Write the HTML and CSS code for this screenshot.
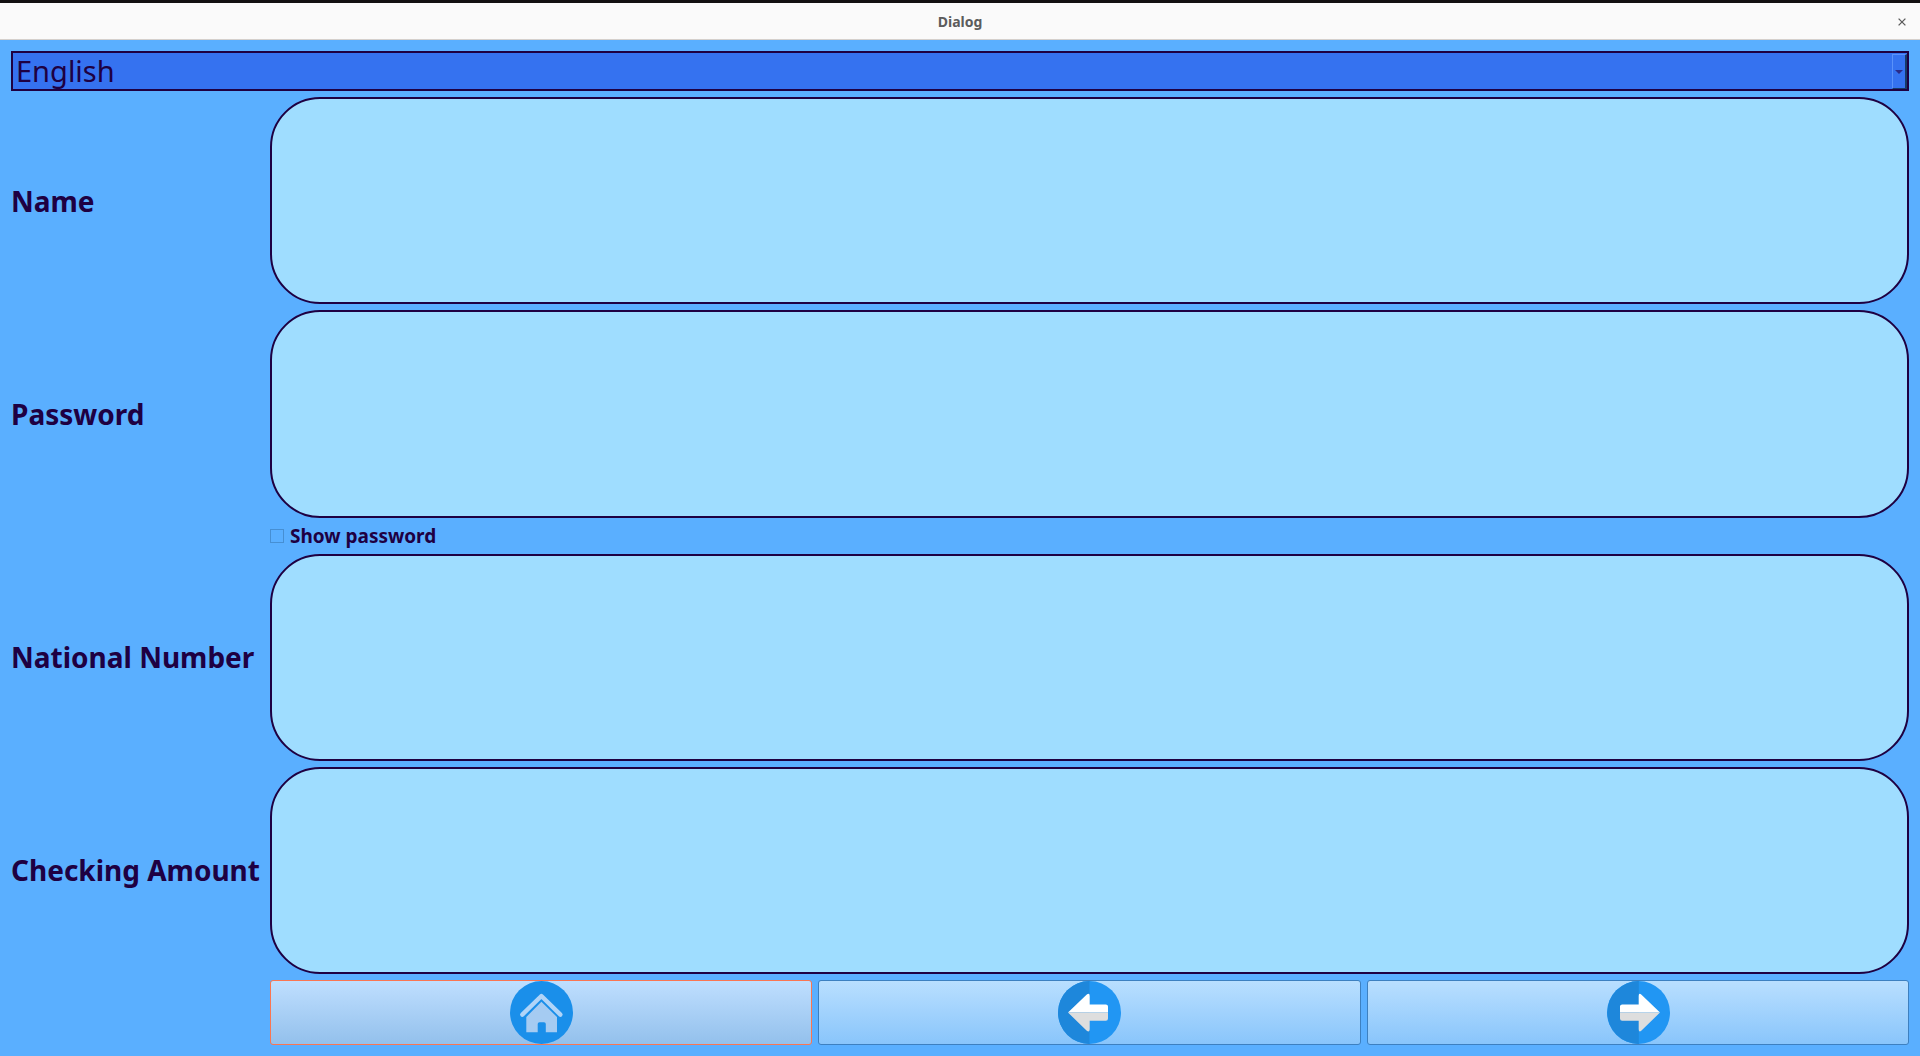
FILE: index.html
```html
<!DOCTYPE html>
<html lang="en">
<head>
<meta charset="utf-8">
<title>Dialog</title>
<link rel="stylesheet" href="styles.css">
</head>
<body>
<header class="titlebar">
  <h1 class="title">Dialog</h1>
  <button class="close" type="button" aria-label="Close">
    <svg width="8" height="8" viewBox="0 0 8 8" aria-hidden="true"><path d="M.6.6 7.4 7.4M7.4.6.6 7.4" fill="none" stroke="#5c5c5c" stroke-width="1.3"/></svg>
  </button>
</header>
<form class="dialog">
  <div class="language">
    <select class="language-select" aria-label="Language">
      <option>English</option>
    </select>
    <span class="drop-button" aria-hidden="true">
      <svg width="8" height="4" viewBox="0 0 8 4"><path d="M0 0H8L4 4Z" fill="#2b2a86"/></svg>
    </span>
  </div>
  <div class="fields">
    <label class="label" for="name">Name</label>
    <input class="field" id="name" type="text">
    <label class="label" for="password">Password</label>
    <input class="field" id="password" type="password">
    <label class="show">
      <input class="check" type="checkbox">
      <span>Show password</span>
    </label>
    <label class="label" for="national">National Number</label>
    <input class="field" id="national" type="text">
    <label class="label" for="amount">Checking Amount</label>
    <input class="field" id="amount" type="text">
    <div class="actions">
      <button class="action action-focus" type="button" aria-label="Home">
        <svg width="63" height="63" viewBox="0 0 63 63" aria-hidden="true">
          <circle cx="31.5" cy="31.5" r="31.5" fill="#1a8fea"/>
          <path d="M12.3 33.6 31.4 15 50.4 33.6" fill="none" stroke="#b0d4f8" stroke-width="4.4" stroke-linecap="round" stroke-linejoin="round"/>
          <path d="M31.4 20.8 47 36V51.3H35.8V43Q35.8 41.3 34 41.3H29.5Q27.7 41.3 27.7 43V51.3H16.3V36Z" fill="#a5cbf2"/>
        </svg>
      </button>
      <button class="action" type="button" aria-label="Back">
        <svg width="63" height="63" viewBox="0 0 63 63" aria-hidden="true">
          <circle cx="31.5" cy="31.5" r="31.5" fill="#2196f3"/>
          <path d="M31.5 0A31.5 31.5 0 0 0 31.5 63Z" fill="#1e87db"/>
          <path d="M10 31.5 28.5 13.7Q31.7 11.5 31.7 15V23.4H47.8Q50 23.4 50 25.6V31.5Z" fill="#fff"/>
          <path d="M10 31.5 28.5 49.6Q31.7 51.8 31.7 48.3V39.7H47.8Q50 39.7 50 37.5V31.5Z" fill="#dedede"/>
        </svg>
      </button>
      <button class="action" type="button" aria-label="Next">
        <svg width="64" height="63" viewBox="-1 0 64 63" aria-hidden="true">
          <circle cx="31.5" cy="31.5" r="31.5" fill="#2196f3"/>
          <path d="M31.8 0A31.5 31.5 0 0 0 31.8 63Z" fill="#1e87db"/>
          <path d="M53 31.5 34.5 13.7Q31.7 11.5 31.7 15V23.4H15.2Q13 23.4 13 25.6V31.5Z" fill="#fff"/>
          <path d="M53 31.5 34.5 49.6Q31.7 51.8 31.7 48.3V39.7H15.2Q13 39.7 13 37.5V31.5Z" fill="#dedede"/>
        </svg>
      </button>
    </div>
  </div>
</form>
</body>
</html>
```
FILE: styles.css
```css
* {
  box-sizing: border-box;
}

body {
  margin: 0;
  min-height: 100vh;
  display: flex;
  flex-direction: column;
  background: #5aafff;
  color: #1e0042;
  font-family: "Noto Sans", "Liberation Sans", sans-serif;
}

.titlebar {
  display: grid;
  grid-template-columns: 1fr auto 1fr;
  align-items: center;
  height: 40px;
  padding: 1px 11px 0;
  border-top: 3px solid #131011;
  border-bottom: 1px solid #d5d0cc;
  background: #fafafa;
}

.title {
  grid-column: 2;
  margin: 0;
  font-size: 14px;
  line-height: 20px;
  font-weight: 700;
  color: #5c5c5c;
}

.close {
  justify-self: end;
  display: flex;
  padding: 3px;
  border: 0;
  background: none;
}

.dialog {
  flex: 1;
  display: flex;
  flex-direction: column;
  gap: 6px;
  padding: 11px;
}

.language {
  position: relative;
  display: flex;
}

.language-select {
  flex: 1;
  height: 40px;
  padding: 0 20px 0 3px;
  border: 2px solid #1e0042;
  border-radius: 0;
  appearance: none;
  background: #3572f0;
  color: inherit;
  font-family: inherit;
  font-size: 29px;
  line-height: 36px;
}

.drop-button {
  position: absolute;
  top: 3px;
  right: 2px;
  bottom: 2px;
  width: 15px;
  display: flex;
  align-items: center;
  justify-content: center;
  border: 1px solid #5a92fa;
  border-right: 2px solid #173a68;
  border-bottom: 1px solid #173a68;
  pointer-events: none;
}

.fields {
  flex: 1;
  display: grid;
  grid-template-columns: minmax(253px, max-content) 1fr;
  grid-template-rows: 1fr 1fr 24px 1fr 1fr 65px;
  gap: 6px;
}

.label {
  align-self: center;
  font-size: 28px;
  line-height: 36px;
  font-weight: 700;
}

.field {
  width: 100%;
  min-height: 104px;
  padding: 0 24px;
  border: 2px solid #1e0042;
  border-radius: 50px;
  background: #9fddff;
  color: inherit;
  font-family: inherit;
  font-size: 28px;
  outline: none;
}

.show {
  grid-column: 2;
  justify-self: start;
  display: flex;
  align-items: center;
  gap: 6px;
  font-size: 19px;
  line-height: 24px;
  font-weight: 700;
}

.check {
  width: 14px;
  height: 14px;
  margin: 0;
  border: 1px solid #468fd3;
  appearance: none;
}

.check:checked {
  background: #1e0042;
}

.actions {
  grid-column: 2;
  display: grid;
  grid-template-columns: repeat(3, 1fr);
  gap: 6px;
}

.action {
  display: flex;
  align-items: center;
  justify-content: center;
  padding: 0;
  border: 1px solid #3d80c0;
  border-radius: 3px;
  background: linear-gradient(#b9dfff, #89c5fb);
}

.action-focus {
  border-color: #fb7550;
  background: linear-gradient(#bfdfff, #93c0ec);
}
```
